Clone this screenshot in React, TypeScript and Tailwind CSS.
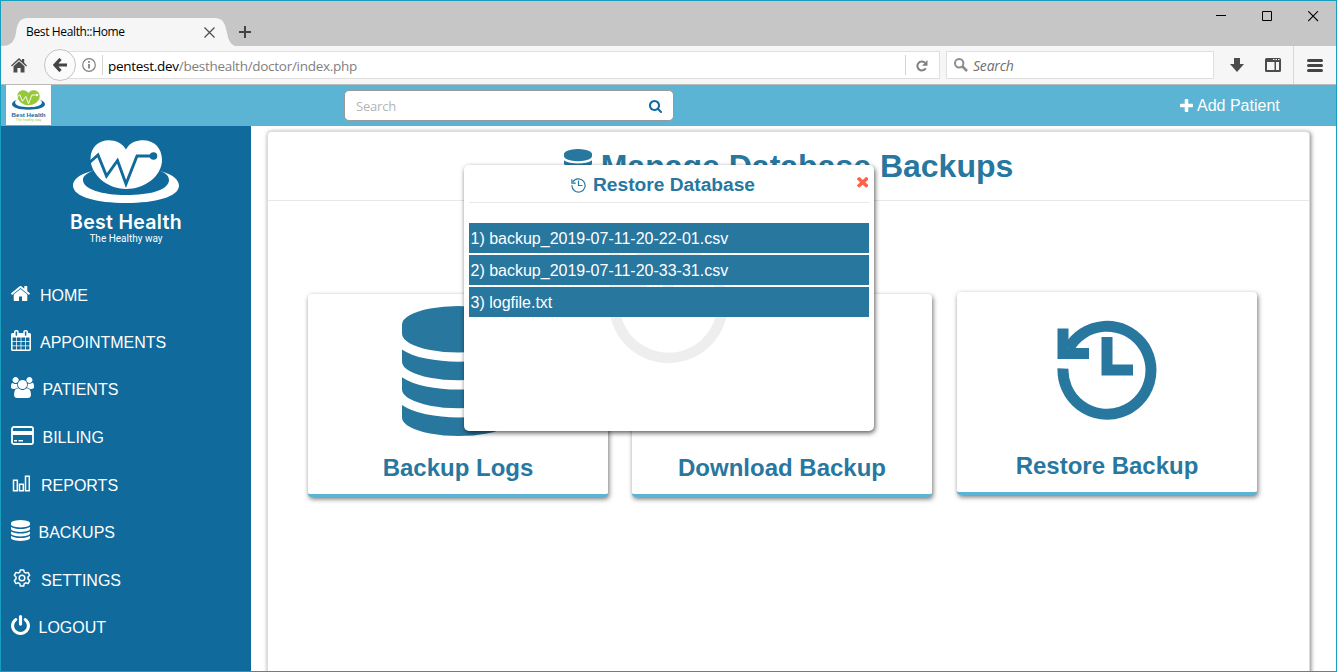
import type { ReactNode } from "react";

const P = {
  db: "M896 768q237 0 443-43t325-127v170q0 69-103 128t-280 93.5-385 34.5-385-34.5-280-93.5-103-128v-170q119 84 325 127t443 43zm0 768q237 0 443-43t325-127v170q0 69-103 128t-280 93.5-385 34.5-385-34.5-280-93.5-103-128v-170q119 84 325 127t443 43zm0-384q237 0 443-43t325-127v170q0 69-103 128t-280 93.5-385 34.5-385-34.5-280-93.5-103-128v-170q119 84 325 127t443 43zm0-1152q208 0 385 34.5t280 93.5 103 128v128q0 69-103 128t-280 93.5-385 34.5-385-34.5-280-93.5-103-128v-128q0-69 103-128t280-93.5 385-34.5z",
  home: "M1472 992v480q0 26-19 45t-45 19h-384v-384h-256v384h-384q-26 0-45-19t-19-45v-480q0-1 .5-3t.5-3l575-474 575 474q1 2 1 6zm223-69l-62 74q-8 9-21 11h-3q-13 0-21-7l-692-577-692 577q-12 8-24 7-13-2-21-11l-62-74q-8-10-7-23.5t11-21.5l719-599q32-26 76-26t76 26l244 204v-195q0-14 9-23t23-9h192q14 0 23 9t9 23v408l219 182q10 8 11 21.5t-7 23.5z",
  calendar:
    "M192 1664h288v-288h-288v288zm352 0h320v-288h-320v288zm-352-352h288v-320h-288v320zm352 0h320v-320h-320v320zm-352-384h288v-288h-288v288zm736 736h320v-288h-320v288zm-384-736h320v-288h-320v288zm768 736h288v-288h-288v288zm-384-352h320v-320h-320v320zm-352-864v-288q0-13-9.5-22.5t-22.5-9.5h-64q-13 0-22.5 9.5t-9.5 22.5v288q0 13 9.5 22.5t22.5 9.5h64q13 0 22.5-9.5t9.5-22.5zm736 864h288v-320h-288v320zm-384-384h320v-288h-320v288zm384 0h288v-288h-288v288zm32-480v-288q0-13-9.5-22.5t-22.5-9.5h-64q-13 0-22.5 9.5t-9.5 22.5v288q0 13 9.5 22.5t22.5 9.5h64q13 0 22.5-9.5t9.5-22.5zm384-64v1280q0 52-38 90t-90 38h-1408q-52 0-90-38t-38-90v-1280q0-52 38-90t90-38h128v-96q0-66 47-113t113-47h64q66 0 113 47t47 113v96h384v-96q0-66 47-113t113-47h64q66 0 113 47t47 113v96h128q52 0 90 38t38 90z",
  users:
    "M657 896q-162 5-265 128h-134q-82 0-138-40.5t-56-118.5q0-353 124-353 6 0 43.5 21t97.5 42.5 119 21.5q67 0 133-23-5 37-5 66 0 159 81 286zm1071 637q0 120-73 189.5t-194 69.5h-874q-121 0-194-69.5t-73-189.5q0-53 3.5-103.5t14-109 26.5-108.5 43-97.5 62-81 85.5-53.5 111.5-20q10 0 43 21.5t73 48 107 48 135 21.5 135-21.5 107-48 73-48 43-21.5q61 0 111.5 20t85.5 53.5 62 81 43 97.5 26.5 108.5 14 109 3.5 103.5zm-1024-1277q0 106-75 181t-181 75-181-75-75-181 75-181 181-75 181 75 75 181zm704 384q0 159-112.5 271.5t-271.5 112.5-271.5-112.5-112.5-271.5 112.5-271.5 271.5-112.5 271.5 112.5 112.5 271.5zm576 225q0 78-56 118.5t-138 40.5h-134q-103-123-265-128 81-127 81-286 0-29-5-66 66 23 133 23 59 0 119-21.5t97.5-42.5 43.5-21q124 0 124 353zm-128-609q0 106-75 181t-181 75-181-75-75-181 75-181 181-75 181 75 75 181z",
  power:
    "M1664 896q0 156-61 298t-164 245-245 164-298 61-298-61-245-164-164-245-61-298q0-182 80.5-343t226.5-270q43-32 95.5-25t83.5 50q32 42 24.5 94.5t-49.5 84.5q-98 74-151.5 181t-53.5 228q0 104 40.5 198.5t109.5 163.5 163.5 109.5 198.5 40.5 198.5-40.5 163.5-109.5 109.5-163.5 40.5-198.5q0-121-53.5-228t-151.5-181q-42-32-49.5-84.5t24.5-94.5q31-43 84-50t95 25q146 109 226.5 270t80.5 343zm-640-768v640q0 52-38 90t-90 38-90-38-38-90v-640q0-52 38-90t90-38 90 38 38 90z",
  search:
    "M1216 832q0-185-131.5-316.5t-316.5-131.5-316.5 131.5-131.5 316.5 131.5 316.5 316.5 131.5 316.5-131.5 131.5-316.5zm512 832q0 52-38 90t-90 38q-54 0-90-38l-343-342q-179 124-399 124-143 0-273.5-55.5t-225-150-150-225-55.5-273.5 55.5-273.5 150-225 225-150 273.5-55.5 273.5 55.5 225 150 150 225 55.5 273.5q0 220-124 399l343 343q37 37 37 90z",
  plus: "M1600 736v192q0 40-28 68t-68 28h-416v416q0 40-28 68t-68 28h-192q-40 0-68-28t-28-68v-416h-416q-40 0-68-28t-28-68v-192q0-40 28-68t68-28h416v-416q0-40 28-68t68-28h192q40 0 68 28t28 68v416h416q40 0 68 28t28 68z",
  times:
    "M1490 1322q0 40-28 68l-136 136q-28 28-68 28t-68-28l-294-294-294 294q-28 28-68 28t-68-28l-136-136q-28-28-28-68t28-68l294-294-294-294q-28-28-28-68t28-68l136-136q28-28 68-28t68 28l294 294 294-294q28-28 68-28t68 28l136 136q28 28 28 68t-28 68l-294 294 294 294q28 28 28 68z",
};

function Icon({ d, box, className }: { d: string; box: string; className: string }) {
  return (
    <svg viewBox={box} preserveAspectRatio="none" fill="currentColor" className={`block shrink-0 ${className}`}>
      <path d={d} />
    </svg>
  );
}

function LogoMark({ className, heart, ring, line }: { className: string; heart: string; ring: string; line: string }) {
  return (
    <svg viewBox="0 0 106 64" className={`block shrink-0 ${className}`}>
      <path
        fill={ring}
        fillRule="evenodd"
        d="M53 27C82 27 106 34 106 45.500S82 63 53 63 0 57 0 45.500 24 27 53 27ZM53 25C30 27 10 31 10 40S29 55 53 55 96 50 96 40 76 27 53 25Z"
      />
      <path fill={line} d="M53 50C39 50 27 41 20 31L24 24H84L86 31C78 42 67 50 53 50Z" />
      <path
        fill={heart}
        d="M53 9.500C57 2 64 .3 70 .3C81 .3 89 8 89 20C89 36 72 49 53 49C34 49 17.500 34 17.500 19C17.500 7 26 .3 36 .3C43 .3 49 3 53 9.500Z"
      />
      <path d="M16.500 22.500L25 15L33.500 36L44.500 20.500L53 44L64 16H77" fill="none" stroke={line} strokeWidth="2.900" />
      <circle cx="80.500" cy="16" r="3.800" fill={line} />
    </svg>
  );
}

function History({ className, stroke }: { className: string; stroke: number }) {
  return (
    <svg viewBox="0 0 100 100" fill="none" stroke="currentColor" strokeWidth={stroke} className={`block shrink-0 ${className}`}>
      <path d="M6 48.500A44 44 0 1 0 12 28" />
      <path d="M6 8.500V33.500H32M50 17V50H76" />
    </svg>
  );
}

function CardIcon() {
  return (
    <svg viewBox="0 0 23 19" className="block h-[19px] w-[23px] shrink-0">
      <rect x="1" y="1" width="21" height="17" rx="1.800" fill="none" stroke="white" strokeWidth="1.800" />
      <path fill="white" d="M1 5h21v4H1zM3 14h3v1.500H3zM7.500 14h4.500v1.500H7.500z" />
    </svg>
  );
}

function BarsIcon() {
  return (
    <svg viewBox="0 0 18 17" fill="none" stroke="white" strokeWidth="1.500" className="block h-[17px] w-[18px] shrink-0">
      <path d="M1.500 5.200h3.800v10.600H1.500zM7.500 9.200h3.800v6.600H7.500zM13.500 1.200h3.800v14.600h-3.800z" />
    </svg>
  );
}

function GearIcon() {
  return (
    <svg viewBox="0 0 18 18" fill="none" stroke="white" strokeWidth="1.500" strokeLinejoin="round" className="block size-[18px] shrink-0">
      <path d="M7.300.9h3.400l.5 2.300 1.500.9 2.300-.7 1.700 2.900-1.700 1.700v1.900l1.700 1.700-1.700 3-2.300-.8-1.500.9-.5 2.400H7.300l-.5-2.400-1.500-.9-2.300.8-1.700-3L3 9.900V8L1.300 6.300 3 3.400l2.300.7 1.500-.9z" />
      <circle cx="9" cy="9" r="2.800" />
    </svg>
  );
}

type Item = { label: string; icon: ReactNode; box: string; row: string };

const items: Item[] = [
  { label: "HOME", row: "", box: "w-[29px] pb-[2px]", icon: <Icon d={P.home} box="89 248 1614 1288" className="h-[15px] w-[19px]" /> },
  { label: "APPOINTMENTS", row: "", box: "w-[29px] pb-[2px]", icon: <Icon d={P.calendar} box="64 0 1664 1792" className="h-[21px] w-5" /> },
  { label: "PATIENTS", row: "", box: "w-[31.500px] pb-[2px]", icon: <Icon d={P.users} box="64 0 1920 1792" className="h-[21px] w-[23px]" /> },
  { label: "BILLING", row: "mt-px", box: "w-[31.500px] pb-[2px]", icon: <CardIcon /> },
  { label: "REPORTS", row: "mt-px", box: "w-[30px] pl-px pb-[2px]", icon: <BarsIcon /> },
  { label: "BACKUPS", row: "", box: "w-[27.500px] pb-[2px]", icon: <Icon d={P.db} box="128 0 1536 1792" className="h-[21px] w-[19px]" /> },
  { label: "SETTINGS", row: "mt-px", box: "w-[30px] pl-[1.500px] pb-[3px]", icon: <GearIcon /> },
  { label: "LOGOUT", row: "", box: "w-[27.500px] pb-[4px]", icon: <Icon d={P.power} box="128 0 1536 1664" className="h-5 w-[19px]" /> },
];

function BrowserChrome() {
  return (
    <header className="flex h-[84px] shrink-0 flex-col bg-[#f6f6f6] font-['Open_Sans',sans-serif]">
      <div className="flex h-[45px] items-start bg-[#c6c6c6]">
        <div className="relative mt-[17px] h-7 w-[233px]">
          <svg viewBox="0 0 233 28" className="absolute inset-0 h-7 w-[233px]">
            <path fill="#f6f6f6" d="M0 28C9 28 13 25 15 15C16 5 19 0 27 0H213C222 0 224 5 226 15C228 25 231 28 237 28Z" />
          </svg>
          <div className="relative flex h-[26px] items-center pt-[1px] pl-[25px] text-xs tracking-[-0.360px] text-black">
            <span className="w-[178px]">Best Health::Home</span>
            <svg viewBox="0 0 11 11" className="mt-[1px] size-[11px]" stroke="#4c4c4c" strokeWidth="1.200">
              <path d="M.5.5l10 10M10.500.5l-10 10" />
            </svg>
          </div>
        </div>
        <svg viewBox="0 0 12 12" className="mt-[25px] ml-[5px] size-3" stroke="#444" strokeWidth="2">
          <path d="M6 0v12M0 6h12" />
        </svg>
        <div className="mt-[10px] mr-[17px] ml-auto flex gap-[35px] text-black">
          <svg viewBox="0 0 11 11" className="size-[11px]" stroke="currentColor">
            <path d="M0 4.500h10" />
          </svg>
          <svg viewBox="0 0 11 11" className="size-[11px]" fill="none" stroke="currentColor">
            <path d="M.5.5h9v9h-9z" />
          </svg>
          <svg viewBox="0 0 11 11" className="size-[11px]" stroke="currentColor" strokeWidth="1.100">
            <path d="M.2.200l9.800 9.800M10 .2l-9.800 9.800" />
          </svg>
        </div>
      </div>
      <div className="flex h-[39px] items-center border-b border-[#b9b9b9]">
        <svg viewBox="0 0 16 15" className="mt-px ml-[10px] h-[15px] w-4 shrink-0" fill="#4c4c4c">
          <path d="M8 0l3 2.800V1h2.200v3.800L16 7.600l-.9.900L8 2 .9 8.500 0 7.600z" />
          <path d="M8 3.300l5.500 5V14.500H9.600V10H6.400v4.500H2.500V8.300z" />
        </svg>
        <div className="relative z-10 ml-[17px] grid size-8 shrink-0 place-items-center rounded-full border border-[#c4c4c4] bg-[#fbfbfb]">
          <svg viewBox="0 0 14 14" className="size-[14px]" fill="none" stroke="#444" strokeWidth="3.200">
            <path d="M7.500 1L2 7l5.500 6M2.500 7H14" />
          </svg>
        </div>
        <div className="-ml-4 flex h-7 w-[880px] items-center border border-[#dfdfdf] bg-white">
          <svg viewBox="0 0 14 14" className="ml-[21px] size-[14px] shrink-0" fill="none" stroke="#808080" strokeWidth="1.200">
            <circle cx="7" cy="7" r="6.300" />
            <path strokeWidth="1.800" d="M7 6v4.500M7 3v1.800" />
          </svg>
          <div className="ml-[6px] h-5 w-px bg-[#d4d4d4]" />
          <div className="ml-[5px] pt-[2px] text-[13.500px] tracking-[-0.280px] text-[#808080]">
            <span className="text-black">pentest.dev</span>/besthealth/doctor/index.php
          </div>
          <div className="ml-auto h-5 w-px bg-[#d4d4d4]" />
          <svg viewBox="0 0 12 12" className="mt-px mr-[11px] ml-[10px] size-3 shrink-0" fill="none" stroke="#808080" strokeWidth="2">
            <path d="M9.700 8.300A4.500 4.500 0 1 1 9 2.700" />
            <path fill="#808080" stroke="none" d="M11.500 0v5.800H6z" />
          </svg>
        </div>
        <div className="ml-[6px] flex h-7 w-[268px] items-center border border-[#dfdfdf] bg-white text-sm text-[#6f6f6f] italic">
          <svg viewBox="0 0 14 14" className="mr-[5px] ml-[7px] size-[14px]" fill="none" stroke="#8c8c8c" strokeWidth="2">
            <circle cx="5.200" cy="5.200" r="4.200" />
            <path strokeWidth="2.600" d="M8.500 8.500l4.500 4.500" />
          </svg>
          <span className="pt-[2px] tracking-[-0.200px]">Search</span>
        </div>
        <svg viewBox="0 0 14 14" className="ml-4 size-[14px]" fill="#4c4c4c">
          <path d="M4 0h6v6h4l-7 8-7-8h4z" />
        </svg>
        <svg viewBox="0 0 16 14" className="ml-[21px] h-[14px] w-4" fill="#4c4c4c">
          <path fillRule="evenodd" d="M1.500 0h13Q16 0 16 1.500v11q0 1.500-1.500 1.500h-13Q0 14 0 12.500v-11Q0 0 1.500 0zM2 4v8h7.500V4zM11 4v8h3V4zM8 1v1h1.500V1zM10.500 1v1H12V1zM13 1v1h1.500V1z" />
        </svg>
        <div className="ml-3 h-full w-px bg-[#d8d8d8]" />
        <svg viewBox="0 0 16 13" className="ml-[13px] h-[13px] w-4" stroke="#444" strokeWidth="3" strokeLinecap="round">
          <path d="M1.500 1.500h13M1.500 6.500h13M1.500 11.500h13" />
        </svg>
      </div>
    </header>
  );
}

const cardShell =
  "flex w-[300px] shrink-0 flex-col items-center rounded-[4px] border-b-[3px] border-[#5cb4d4] bg-white shadow-[1px_2px_5px_rgba(0,0,0,0.55)]";

export default function App() {
  return (
    <div className="flex h-[672px] w-[1337px] flex-col overflow-hidden border border-[#159fbf] bg-white font-['Liberation_Sans',sans-serif]">
      <BrowserChrome />
      <div className="flex h-[41px] shrink-0 items-center bg-[#5cb4d4]">
        <div className="ml-[5px] flex h-10 w-[45px] shrink-0 flex-col items-center self-start overflow-hidden bg-white pt-[5px]">
          <LogoMark className="h-5 w-[33px]" heart="#97c83c" ring="#15689c" line="white" />
          <div className="mt-[2px] text-[6.200px] leading-[6px] font-extrabold whitespace-nowrap text-[#15689c]">Best Health</div>
          <div className="text-[3.500px] leading-[4px] whitespace-nowrap text-[#97c83c]">The healthy way</div>
        </div>
        <div className="ml-[293px] flex h-[31px] w-[330px] items-center rounded-[5px] border border-[#999] bg-white">
          <span className="ml-[11px] pt-[2px] font-['Open_Sans',sans-serif] text-[13px] tracking-[-0.200px] text-[#b4b4b4]">Search</span>
          <Icon d={P.search} box="64 128 1664 1664" className="mt-px mr-[11px] ml-auto size-[13px] text-[#106a9c]" />
        </div>
        <div className="ml-[506px] flex items-center text-base text-white">
          <Icon d={P.plus} box="192 128 1408 1408" className="mr-1 size-[13px]" />
          <span>Add Patient</span>
        </div>
      </div>
      <div className="flex min-h-0 grow">
        <nav className="w-[250px] shrink-0 bg-[#106a9c] text-white">
          <div className="flex h-[145px] flex-col items-center pt-[14px]">
            <LogoMark className="h-16 w-[106px]" heart="white" ring="white" line="#106a9c" />
            <div className="mt-[6px] font-['Inter',sans-serif] text-[19.500px] leading-6 font-semibold tracking-[0.300px]">Best Health</div>
            <div className="font-['Roboto',sans-serif] text-[10px] leading-[10px]">The Healthy way</div>
          </div>
          {items.map((it) => (
            <div key={it.label} className={`flex h-[47px] items-center pl-[10px] text-base ${it.row}`}>
              <div className={`shrink-0 ${it.box}`}>{it.icon}</div>
              <span className="pt-[2px]">{it.label}</span>
            </div>
          ))}
        </nav>
        <main className="relative ml-4 h-[560px] w-[1043px] rounded-[4px] text-[#28779f]">
          <div className="mt-[5px] h-[560px] rounded-[4px] border border-[#ddd] bg-white shadow-[1px_1px_4px_rgba(0,0,0,0.5)]">
            <div className="flex h-[69px] items-center justify-center border-b border-[#e8e8e8]">
              <Icon d={P.db} box="128 0 1536 1792" className="mr-[9px] h-[34px] w-7" />
              <h1 className="-mt-px text-[32px] font-bold">Manage Database Backups</h1>
            </div>
            <div className="flex items-start pl-[40px]">
              <div className={`${cardShell} mt-[93px] h-[203px] pt-[12px]`}>
                <Icon d={P.db} box="128 0 1536 1792" className="h-[130px] w-[113px]" />
                <h2 className="mt-[16px] text-2xl font-bold">Backup Logs</h2>
              </div>
              <div className={`${cardShell} mt-[93px] ml-[24px] h-[203px] pt-[158px]`}>
                <h2 className="text-2xl font-bold">Download Backup</h2>
              </div>
              <div className={`${cardShell} mt-[91px] ml-[25px] h-[203px] pt-[28px]`}>
                <History className="size-[100px]" stroke={11} />
                <h2 className="mt-[30px] text-2xl font-bold">Restore Backup</h2>
              </div>
            </div>
          </div>
          <section className="absolute top-[39px] left-[197px] z-20 h-[266px] w-[410px] rounded-[5px] bg-white px-[5px] shadow-[1px_2px_5px_rgba(0,0,0,0.65)]">
            <History className="absolute top-[77px] left-[143px] size-[123px] text-[#eee]" stroke={8.5} />
            <div className="relative flex h-[38px] items-center justify-center border-b border-[#e8e8e8] pr-3">
              <History className="mt-[3px] mr-[7px] size-[15px]" stroke={8} />
              <h3 className="mt-[4px] text-[19.200px] font-bold">Restore Database</h3>
              <Icon d={P.times} box="302 238 1188 1316" className="absolute top-[11px] right-[1px] size-[11.500px] text-[#ff6347]" />
            </div>
            <ul className="relative mt-5 flex flex-col gap-[2px] text-base text-white">
              {["1) backup_2019-07-11-20-22-01.csv", "2) backup_2019-07-11-20-33-31.csv", "3) logfile.txt"].map((f) => (
                <li key={f} className="flex h-[30px] items-center bg-[#28779f] pt-[2px] pl-[1.500px]">
                  {f}
                </li>
              ))}
            </ul>
          </section>
        </main>
      </div>
    </div>
  );
}
